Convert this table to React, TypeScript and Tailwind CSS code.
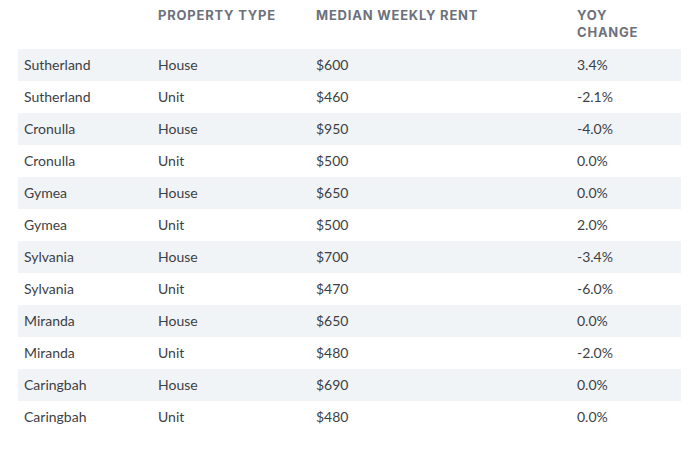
import React from 'react';

// Median weekly rent by suburb
const rows = [
  { suburb: 'Sutherland', type: 'House', rent: '$600', yoy: '3.4%' },
  { suburb: 'Sutherland', type: 'Unit', rent: '$460', yoy: '-2.1%' },
  { suburb: 'Cronulla', type: 'House', rent: '$950', yoy: '-4.0%' },
  { suburb: 'Cronulla', type: 'Unit', rent: '$500', yoy: '0.0%' },
  { suburb: 'Gymea', type: 'House', rent: '$650', yoy: '0.0%' },
  { suburb: 'Gymea', type: 'Unit', rent: '$500', yoy: '2.0%' },
  { suburb: 'Sylvania', type: 'House', rent: '$700', yoy: '-3.4%' },
  { suburb: 'Sylvania', type: 'Unit', rent: '$470', yoy: '-6.0%' },
  { suburb: 'Miranda', type: 'House', rent: '$650', yoy: '0.0%' },
  { suburb: 'Miranda', type: 'Unit', rent: '$480', yoy: '-2.0%' },
  { suburb: 'Caringbah', type: 'House', rent: '$690', yoy: '0.0%' },
  { suburb: 'Caringbah', type: 'Unit', rent: '$480', yoy: '0.0%' },
];

const App: React.FC = () => {
  return (
    <div className="min-h-screen bg-white pl-[18px] pr-[19px] font-['Inter',sans-serif]">
      <table className="w-full border-collapse table-fixed">
        <colgroup>
          <col className="w-[134px]" />
          <col className="w-[158px]" />
          <col className="w-[261px]" />
          <col />
        </colgroup>
        <thead>
          <tr className="h-[49px] align-top text-left text-[13px] font-bold uppercase tracking-[0.06em] leading-[17px] text-[#6d717b]">
            <th className="px-[6px] pt-[7px]"></th>
            <th className="px-[6px] pt-[7px]">Property Type</th>
            <th className="px-[6px] pt-[7px]">Median Weekly Rent</th>
            <th className="px-[6px] pt-[7px] pr-[40px]">YOY Change</th>
          </tr>
        </thead>
        <tbody className="font-['Lato',sans-serif]">
          {rows.map((r, i) => (
            <tr
              key={i}
              className={`h-[32px] text-[14px] text-[#3c3f45] ${i % 2 === 0 ? 'bg-[#f1f4f7]' : 'bg-white'}`}
            >
              <td className="px-[6px] pb-[2px]">{r.suburb}</td>
              <td className="px-[6px] pb-[2px]">{r.type}</td>
              <td className="px-[6px] pb-[2px]">{r.rent}</td>
              <td className="px-[6px] pb-[2px]">{r.yoy}</td>
            </tr>
          ))}
        </tbody>
      </table>
    </div>
  );
};

export default App;
